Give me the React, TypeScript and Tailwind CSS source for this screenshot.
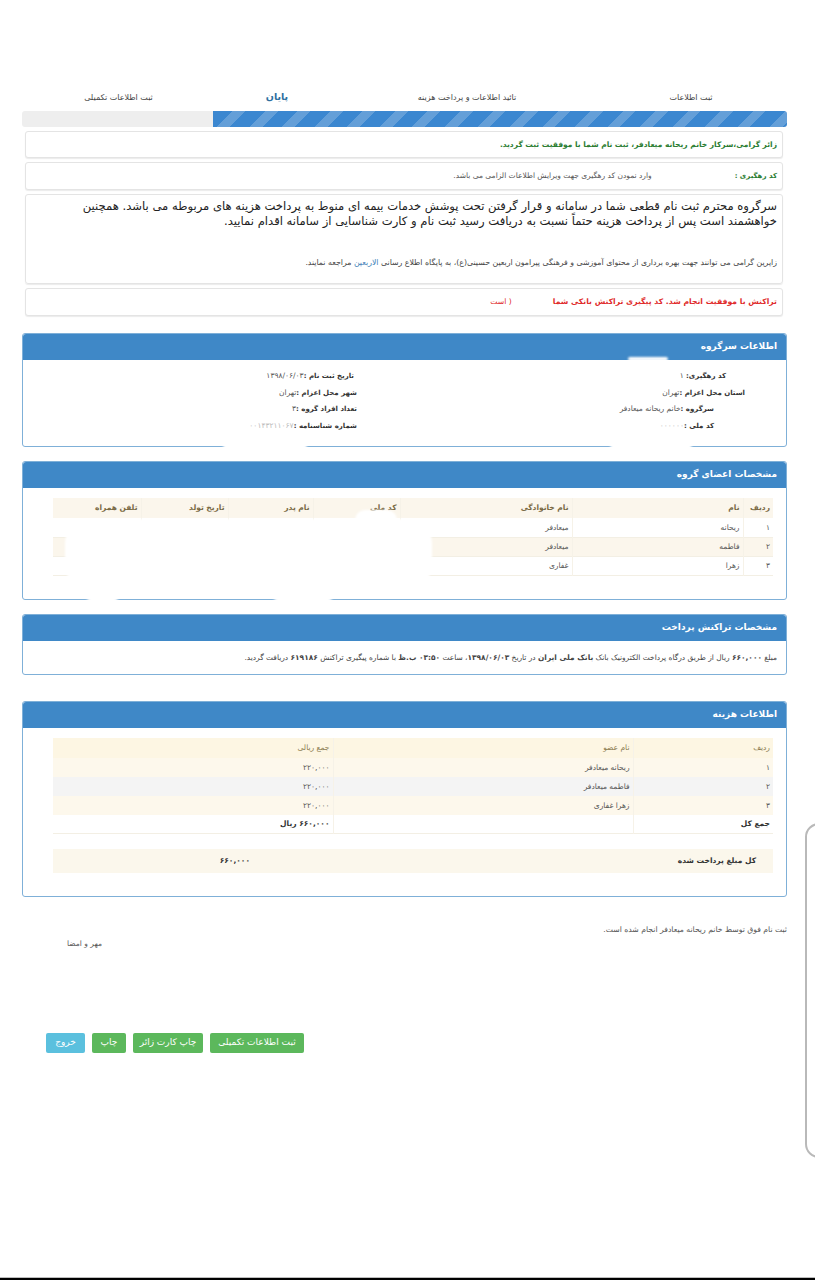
import React from "react";

const font = { fontFamily: '"DejaVu Sans", "Noto Sans", sans-serif' };

function Panel({ title, className, children }: { title: string; className: string; children: React.ReactNode }) {
  return (
    <section className={`ml-[22px] mr-[28px] rounded-[3px] border border-[#7fb0d8] bg-white ${className}`}>
      <h2 className="flex h-[26px] items-center rounded-t-[3px] bg-[#3f88c7] px-[9px] text-[9px] font-bold text-white">{title}</h2>
      {children}
    </section>
  );
}

function Alert({ className, children }: { className: string; children: React.ReactNode }) {
  return (
    <div className={`ml-[25px] mr-[32px] flex items-center rounded-[3px] border border-[#e4e4e4] bg-white px-[5px] shadow-[0_1px_1px_rgba(0,0,0,0.08)] ${className}`}>
      {children}
    </div>
  );
}

const members = [
  ["۱", "ریحانه", "میعادفر", "bg-white"],
  ["۲", "فاطمه", "میعادفر", "bg-[#fbf6ec]"],
  ["۳", "زهرا", "غفاری", "bg-white"],
];

const costs = [
  ["۱", "ریحانه میعادفر", "bg-[#fdf8ec]"],
  ["۲", "فاطمه میعادفر", "bg-[#f4f4f4]"],
  ["۳", "زهرا غفاری", "bg-[#fdf8ec]"],
];

const cell = "border-l border-[#f6f2e8] px-[3px] text-right align-middle last:border-l-0";
const label = "text-[7px] font-bold text-[#333]";

export default function App() {
  return (
    <div dir="rtl" style={font} className="relative h-[1280px] w-[815px] overflow-hidden bg-white text-[7.5px] text-[#555]">
      <div className="ml-[22px] mr-[28px] mt-[77px] flex h-[34px] items-end pb-[7px] text-[8px] text-[#444]">
        <div className="w-[192px] text-center">ثبت اطلاعات</div>
        <div className="w-[256px] text-center">تائید اطلاعات و پرداخت هزینه</div>
        <div className="w-[124px] text-center text-[9.5px] font-bold text-[#2f6f9f]">پایان</div>
        <div className="w-[193px] text-center">ثبت اطلاعات تکمیلی</div>
      </div>

      <div className="ml-[22px] mr-[28px] h-[16px] rounded-[3px] bg-[#eeeeee]">
        <div className="h-full w-[574px] rounded-r-[3px] bg-[#3b87d0] bg-[repeating-linear-gradient(135deg,#3b87d0_0px,#3b87d0_14px,#649fd8_14px,#649fd8_23px)]" />
      </div>

      <Alert className="mt-[4px] h-[27px] text-[7.5px] font-bold text-[#2c7d32]">
        زائر گرامی،سرکار خانم ریحانه میعادفر، ثبت نام شما با موفقیت ثبت گردید.
      </Alert>
      <Alert className="mt-[4px] h-[28px] gap-[83px] text-[7.5px]">
        <b className="text-[7px] text-[#2c7d32]">کد رهگیری : </b>
        <span>وارد نمودن کد رهگیری جهت ویرایش اطلاعات الزامی می باشد.</span>
      </Alert>
      <div className="ml-[25px] mr-[32px] mt-[4px] h-[90px] rounded-[3px] border border-[#e4e4e4] px-[5px] pt-[4px] shadow-[0_1px_1px_rgba(0,0,0,0.08)]">
        <p className="text-[11.6px] leading-[15px] text-[#222]">
          سرگروه محترم ثبت نام قطعی شما در سامانه و قرار گرفتن تحت پوشش خدمات بیمه ای منوط به پرداخت هزینه های مربوطه می باشد. همچنین خواهشمند است پس از پرداخت هزینه حتماً نسبت به دریافت رسید ثبت نام و کارت شناسایی از سامانه اقدام نمایید.
        </p>
        <p className="mt-[28px] text-[7.8px] text-[#444]">
          زایرین گرامی می توانند جهت بهره برداری از محتوای آموزشی و فرهنگی پیرامون اربعین حسینی(ع)، به پایگاه اطلاع رسانی <span className="text-[#3f7fb8]">الاربعین</span> مراجعه نمایند.
        </p>
      </div>
      <Alert className="mt-[4px] h-[28px] gap-[41px] text-[7.7px] font-bold text-[#e02b2b]">
        <span>تراکنش با موفقیت انجام شد. کد پیگیری تراکنش بانکی شما</span>
        <span className="font-normal">( است</span>
      </Alert>

      <Panel title="اطلاعات سرگروه" className="mt-[17px] h-[114px]">
        <div className="pt-[8px] leading-[16.5px]">
          <div className="flex">
            <div className="w-[405px] pr-[60px]"><b className={label}>کد رهگیری:</b> ۱</div>
            <div className="pr-[27px]"><b className={label}>تاریخ ثبت نام :</b>۱۳۹۸/۰۶/۰۳</div>
          </div>
          <div className="flex">
            <div className="w-[405px] pr-[41px]"><b className={label}>استان محل اعزام :</b>تهران</div>
            <div className="pr-[24px]"><b className={label}>شهر محل اعزام :</b>تهران</div>
          </div>
          <div className="flex">
            <div className="w-[405px] pr-[72px]"><b className={label}>سرگروه :</b>خانم ریحانه میعادفر</div>
            <div className="pr-[24px]"><b className={label}>تعداد افراد گروه :</b>۳</div>
          </div>
          <div className="flex">
            <div className="w-[405px] pr-[72px]"><b className={label}>کد ملی :</b><span className="text-[#bbb]">۰۰۰۰۰۰</span></div>
            <div className="pr-[24px]"><b className={label}>شماره شناسنامه :</b><span className="text-[#bbb]">۰۰۱۴۳۲۱۱۰۶۷</span></div>
          </div>
        </div>
      </Panel>

      <Panel title="مشخصات اعضای گروه" className="mt-[14px] h-[139px]">
        <div className="pl-[30px] pr-[13px] pt-[10px]">
          <table className="w-[720px] table-fixed border-collapse text-[7.5px]">
            <thead>
              <tr className="h-[20px] bg-[#fbf6ec] text-[#7a6a45]">
                <th className={`${cell} w-[30px] font-bold`}>ردیف</th>
                <th className={`${cell} w-[171px] font-bold`}>نام</th>
                <th className={`${cell} w-[172px] font-bold`}>نام خانوادگی</th>
                <th className={`${cell} w-[87px] font-bold`}>کد ملی</th>
                <th className={`${cell} w-[85px] font-bold`}>نام پدر</th>
                <th className={`${cell} w-[87px] font-bold`}>تاریخ تولد</th>
                <th className={`${cell} font-bold`}>تلفن همراه</th>
              </tr>
            </thead>
            <tbody>
              {members.map(([n, first, last, bg]) => (
                <tr key={n} className={`h-[19px] border-b border-[#f3efe4] ${bg}`}>
                  <td className={cell}>{n}</td>
                  <td className={cell}>{first}</td>
                  <td className={cell}>{last}</td>
                  <td className={cell}></td>
                  <td className={cell}></td>
                  <td className={cell}></td>
                  <td className={cell}></td>
                </tr>
              ))}
            </tbody>
          </table>
        </div>
      </Panel>

      <Panel title="مشخصات تراکنش پرداخت" className="mt-[14px] h-[61px]">
        <p className="px-[9px] pt-[11px] text-[7.45px] text-[#444]">
          مبلغ <b>۶۶۰,۰۰۰</b> ریال از طریق درگاه پرداخت الکترونیک بانک <b>بانک ملی ایران</b> در تاریخ <b>۱۳۹۸/۰۶/۰۳</b>، ساعت <b>۰۳:۵۰ ب.ظ</b> با شماره پیگیری تراکنش <b>۶۱۹۱۸۶</b> دریافت گردید.
        </p>
      </Panel>

      <Panel title="اطلاعات هزینه" className="mt-[26px] h-[196px]">
        <div className="pl-[30px] pr-[13px] pt-[10px]">
          <table className="w-[720px] table-fixed border-collapse text-[7.5px]">
            <thead>
              <tr className="h-[20px] bg-[#fdf6e3] text-[#8a7a4f]">
                <th className={`${cell} w-[140px] font-normal`}>ردیف</th>
                <th className={`${cell} w-[300px] font-normal`}>نام عضو</th>
                <th className={`${cell} font-normal`}>جمع ریالی</th>
              </tr>
            </thead>
            <tbody>
              {costs.map(([n, name, bg]) => (
                <tr key={n} className={`h-[19px] ${bg}`}>
                  <td className={cell}>{n}</td>
                  <td className={cell}>{name}</td>
                  <td className={cell}>۲۲۰,۰۰۰</td>
                </tr>
              ))}
              <tr className="h-[18px] border-b border-[#f3efe4] font-bold text-[#333]">
                <td className={cell}>جمع کل</td>
                <td className={cell}></td>
                <td className={cell}>۶۶۰,۰۰۰ ریال</td>
              </tr>
            </tbody>
          </table>
          <div className="mt-[15px] flex h-[24px] w-[720px] items-center bg-[#fbf7ec] font-bold text-[#333]">
            <div className="w-[520px] pr-[17px]">کل مبلغ پرداخت شده</div>
            <div className="pr-[3px]">۶۶۰,۰۰۰</div>
          </div>
        </div>
      </Panel>

      <div className="ml-[22px] mr-[28px] mt-[27px] text-[7.7px] text-[#555]">ثبت نام فوق توسط خانم ریحانه میعادفر انجام شده است.</div>
      <div className="ml-[67px] mt-[2px] text-left text-[7.5px] text-[#555]">مهر و امضا</div>

      <div className="mt-[84px] flex justify-end gap-[7px] pl-[46px] text-[9px] text-white">
        <span className="flex h-[20px] w-[94px] items-center justify-center rounded-[2px] bg-[#5cb85c]">ثبت اطلاعات تکمیلی</span>
        <span className="flex h-[20px] w-[70px] items-center justify-center rounded-[2px] bg-[#5cb85c]">چاپ کارت زائر</span>
        <span className="flex h-[20px] w-[34px] items-center justify-center rounded-[2px] bg-[#5cb85c]">چاپ</span>
        <span className="flex h-[20px] w-[39px] items-center justify-center rounded-[2px] bg-[#5bc0de]">خروج</span>
      </div>

      <div className="absolute left-[65px] top-[519px] h-[70px] w-[367px] rounded-[24px] bg-white blur-[1px]" />
      <div className="absolute left-[85px] top-[580px] h-[24px] w-[35px] rounded-full bg-white blur-[1px]" />
      <div className="absolute left-[272px] top-[580px] h-[24px] w-[62px] rounded-full bg-white blur-[1px]" />
      <div className="absolute left-[355px] top-[510px] h-[20px] w-[42px] rounded-full bg-white blur-[1px]" />
      <div className="absolute left-[223px] top-[440px] h-[10px] w-[84px] rounded-full bg-white blur-[1px]" />
      <div className="absolute left-[610px] top-[436px] h-[16px] w-[82px] rounded-full bg-white blur-[1px]" />
      <div className="absolute left-[628px] top-[357px] h-[4px] w-[40px] rounded-full bg-white blur-[1px]" />

      <div className="absolute left-[805px] top-[823px] h-[335px] w-[30px] rounded-l-[14px] border-2 border-[#b9b9b9]" />
      <div className="absolute bottom-0 left-0 right-0 h-[3px] border-t border-[#bdbdbd] bg-black" />
    </div>
  );
}
